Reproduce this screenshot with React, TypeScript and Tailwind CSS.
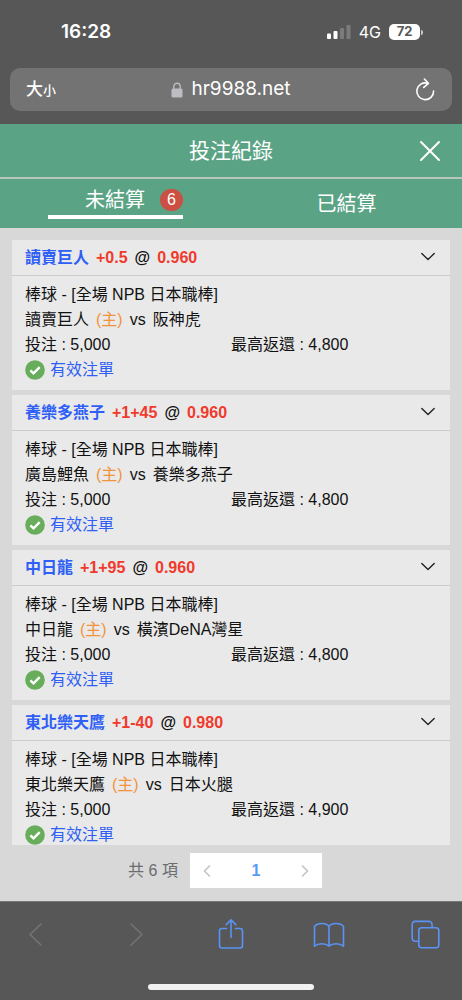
import React from 'react';

interface Bet {
  pick: string;
  line: string;
  odds: string;
  home: string;
  away: string;
  stake: string;
  payout: string;
}

const bets: Bet[] = [
  { pick: '讀賣巨人', line: '+0.5', odds: '0.960', home: '讀賣巨人', away: '阪神虎', stake: '5,000', payout: '4,800' },
  { pick: '養樂多燕子', line: '+1+45', odds: '0.960', home: '廣島鯉魚', away: '養樂多燕子', stake: '5,000', payout: '4,800' },
  { pick: '中日龍', line: '+1+95', odds: '0.960', home: '中日龍', away: '橫濱DeNA灣星', stake: '5,000', payout: '4,800' },
  { pick: '東北樂天鷹', line: '+1-40', odds: '0.980', home: '東北樂天鷹', away: '日本火腿', stake: '5,000', payout: '4,900' },
];

function StatusBar() {
  return (
    <div className="flex h-16 items-center justify-between pl-[61px] pr-[39px] font-['Inter','Liberation_Sans',sans-serif]">
      <span className="text-[19px] font-semibold">16:28</span>
      <div className="flex items-center gap-2">
        <svg width="24" height="15" viewBox="0 0 24 15" fill="#fff" aria-hidden="true">
          <rect x="0" y="8.5" width="4" height="5.5" rx="1" />
          <rect x="6.5" y="6" width="4" height="8" rx="1" />
          <rect x="13" y="3" width="4" height="11" rx="1" fill="#7b7b7b" />
          <rect x="19.5" y="0" width="4" height="14" rx="1" fill="#7b7b7b" />
        </svg>
        <span className="text-base">4G</span>
        <div className="flex items-center gap-px">
          <span className="flex h-4 w-[31px] items-center justify-center rounded-[5px] bg-white text-[13px] font-bold text-[#575757]">
            72
          </span>
          <span className="h-[5px] w-[2px] rounded-r-full bg-[#c8c8c8]" />
        </div>
      </div>
    </div>
  );
}

function AddressBar() {
  return (
    <div className="mx-[10px] mt-1 mb-[13px] grid h-[43px] grid-cols-[1fr_auto_1fr] items-center rounded-[10px] bg-[#737373] px-4">
      <button type="button" className="justify-self-start font-medium leading-none">
        <span className="text-[17px]">大</span>
        <span className="text-[13px]">小</span>
      </button>
      <div className="flex items-center gap-2">
        <svg width="12" height="16" viewBox="0 0 12 16" aria-hidden="true">
          <rect x="0.5" y="6.5" width="11" height="9" rx="1.5" fill="#bdbcc2" />
          <path d="M2.8 7V4.4a3.2 3.2 0 0 1 6.4 0V7" fill="none" stroke="#bdbcc2" strokeWidth="1.4" />
        </svg>
        <span className="font-['Inter','Liberation_Sans',sans-serif] text-[19px]">hr9988.net</span>
      </div>
      <button type="button" aria-label="Reload" className="justify-self-end">
        <svg width="22" height="24" viewBox="0 0 22 24" fill="none" stroke="#fff" strokeWidth="1.6" strokeLinecap="round" strokeLinejoin="round">
          <path d="M13.6 5.2A8.4 8.4 0 1 0 19.6 13" />
          <path d="M10.4 1l4 4.4-4.6 4" />
        </svg>
      </button>
    </div>
  );
}

function BetCard({ bet }: { bet: Bet }) {
  return (
    <article className="shrink-0 bg-[#e9e9e9] pb-2 text-base text-[#111]">
      <h2 className="border-b border-[#cdcdcd]">
        <button type="button" className="flex h-[35px] w-full items-center justify-between pl-[13px] pr-[14px] font-bold">
          <span className="flex gap-[7px]">
            <span className="text-[#2f5ff5]">{bet.pick}</span>
            <span className="text-[#f03a2c]">{bet.line}</span>
            <span>@</span>
            <span className="text-[#f03a2c]">{bet.odds}</span>
          </span>
          <svg width="16" height="12" viewBox="0 0 16 12" fill="none" stroke="#222" strokeWidth="1.4" strokeLinecap="round" strokeLinejoin="round" aria-hidden="true">
            <path d="M1.8 1.6L8 7.6l6.2-6" />
          </svg>
        </button>
      </h2>
      <div className="px-[13px] pt-[6px] leading-[25px]">
        <p>棒球 - [全場 NPB 日本職棒]</p>
        <p className="flex gap-[7px]">
          <span>{bet.home}</span>
          <span className="text-[#f2933c]">(主)</span>
          <span>vs</span>
          <span>{bet.away}</span>
        </p>
        <div className="grid grid-cols-2">
          <p>投注 : {bet.stake}</p>
          <p>最高返還 : {bet.payout}</p>
        </div>
        <p className="flex items-center gap-[5px] text-[#2f5ff5]">
          <svg width="20" height="20" viewBox="0 0 20 20" aria-hidden="true">
            <circle cx="10" cy="10" r="9.8" fill="#67ad5b" />
            <path d="M5.4 10.3l3.1 3.1 6.2-6.3" fill="none" stroke="#fff" strokeWidth="2.4" />
          </svg>
          有效注單
        </p>
      </div>
    </article>
  );
}

function Pagination() {
  return (
    <nav aria-label="Pagination" className="flex items-center justify-center gap-3 pt-2 pb-[13px] pr-3 text-base text-[#6a6c70]">
      <span>共 6 項</span>
      <div className="flex h-[35px] w-[132px] items-center justify-between bg-white px-[9px]">
        <button type="button" aria-label="Previous page">
          <svg width="16" height="14" viewBox="0 0 16 14" fill="none" stroke="#c3c5ca" strokeWidth="1.6">
            <path d="M11 1.500L5.500 7l5.500 5.500" />
          </svg>
        </button>
        <button type="button" className="font-bold text-[#579bf5]">1</button>
        <button type="button" aria-label="Next page">
          <svg width="16" height="14" viewBox="0 0 16 14" fill="none" stroke="#c3c5ca" strokeWidth="1.6">
            <path d="M5 1.500L10.500 7 5 12.500" />
          </svg>
        </button>
      </div>
    </nav>
  );
}

function BottomBar() {
  const icon = 'flex h-8 w-8 items-center justify-center';
  return (
    <footer className="flex h-[99px] shrink-0 flex-col items-center justify-between border-t border-[#777] bg-[#575757] pt-4 pb-[10px]">
      <div className="flex w-full justify-between px-5 text-[#5a93f5]">
        <button type="button" aria-label="Back" className={icon}>
          <svg width="32" height="32" viewBox="0 0 32 32" fill="none" stroke="#747474" strokeWidth="1.6" strokeLinecap="round" strokeLinejoin="round">
            <path d="M21 6L10 16.5 21 27" />
          </svg>
        </button>
        <button type="button" aria-label="Forward" className={icon}>
          <svg width="32" height="32" viewBox="0 0 32 32" fill="none" stroke="#747474" strokeWidth="1.6" strokeLinecap="round" strokeLinejoin="round">
            <path d="M13 6l11 10.5L13 27" />
          </svg>
        </button>
        <button type="button" aria-label="Share" className={icon}>
          <svg width="32" height="32" viewBox="0 0 32 32" fill="none" stroke="currentColor" strokeWidth="1.6" strokeLinecap="round" strokeLinejoin="round">
            <path d="M11.5 10.5H7A2.5 2.5 0 0 0 4.500 13v14.500A2.500 2.500 0 0 0 7 30h18a2.500 2.500 0 0 0 2.500-2.500V13a2.500 2.500 0 0 0-2.500-2.500h-4.500" />
            <path d="M16 19.5V2M11.200 6.600L16 1.800l4.800 4.800" />
          </svg>
        </button>
        <button type="button" aria-label="Bookmarks" className={icon}>
          <svg width="32" height="32" viewBox="0 0 32 32" fill="none" stroke="currentColor" strokeWidth="1.6" strokeLinecap="round" strokeLinejoin="round">
            <path d="M16 8.500C14 4.600 4.500 4.400 1.500 8.500v19.700c4-3.300 11-3.300 14.500 0 3.500-3.300 10.500-3.300 14.500 0V8.500C27.500 4.400 18 4.600 16 8.500zM16 8.500v19.700" />
          </svg>
        </button>
        <button type="button" aria-label="Tabs" className={icon}>
          <svg width="32" height="32" viewBox="0 0 32 32" fill="none" stroke="currentColor" strokeWidth="1.6" strokeLinejoin="round">
            <rect x="8.800" y="9.800" width="20" height="20" rx="2.800" />
            <path d="M8.800 23.200H5a2.800 2.800 0 0 1-2.800-2.800V6.200A2.800 2.800 0 0 1 5 3.400h14.200A2.800 2.800 0 0 1 22 6.200v3.600" />
          </svg>
        </button>
      </div>
      <div className="h-[6px] w-[166px] rounded-full bg-[#f1f1f1]" />
    </footer>
  );
}

export default function App() {
  return (
    <div className="flex h-screen flex-col bg-[#d8d8d8] font-['Liberation_Sans','Noto_Sans_CJK_TC',sans-serif] text-white">
      <header className="shrink-0 bg-[#575757]">
        <StatusBar />
        <AddressBar />
      </header>

      <div className="grid h-[55px] shrink-0 grid-cols-[1fr_auto_1fr] items-center border-b-2 border-[#b9c5bf] bg-[#5ba385] px-5">
        <h1 className="col-start-2 text-[21px]">投注紀錄</h1>
        <button type="button" aria-label="Close" className="justify-self-end">
          <svg width="24" height="24" viewBox="0 0 24 24" fill="none" stroke="#fff" strokeWidth="2" strokeLinecap="round">
            <path d="M3 3l18 18M21 3L3 21" />
          </svg>
        </button>
      </div>

      <div role="tablist" className="grid h-[49px] shrink-0 grid-cols-2 justify-items-center bg-[#5ba385] pb-[9px] text-[20px]">
        <button type="button" role="tab" aria-selected="true" className="flex w-[135px] items-center justify-end gap-[15px] self-end border-b-4 border-white leading-[30px]">
          未結算
          <span className="flex h-[22px] w-[23px] items-center justify-center rounded-full bg-[#cb4f42] text-base">6</span>
        </button>
        <button type="button" role="tab" aria-selected="false" className="self-end leading-[30px]">
          已結算
        </button>
      </div>

      <main className="flex min-h-0 flex-1 flex-col pt-3">
        <div className="mx-3 flex min-h-0 flex-1 flex-col gap-[5px] overflow-y-auto [scrollbar-width:none]">
          {bets.map((bet) => (
            <BetCard key={bet.pick} bet={bet} />
          ))}
        </div>
        <Pagination />
      </main>

      <BottomBar />
    </div>
  );
}
